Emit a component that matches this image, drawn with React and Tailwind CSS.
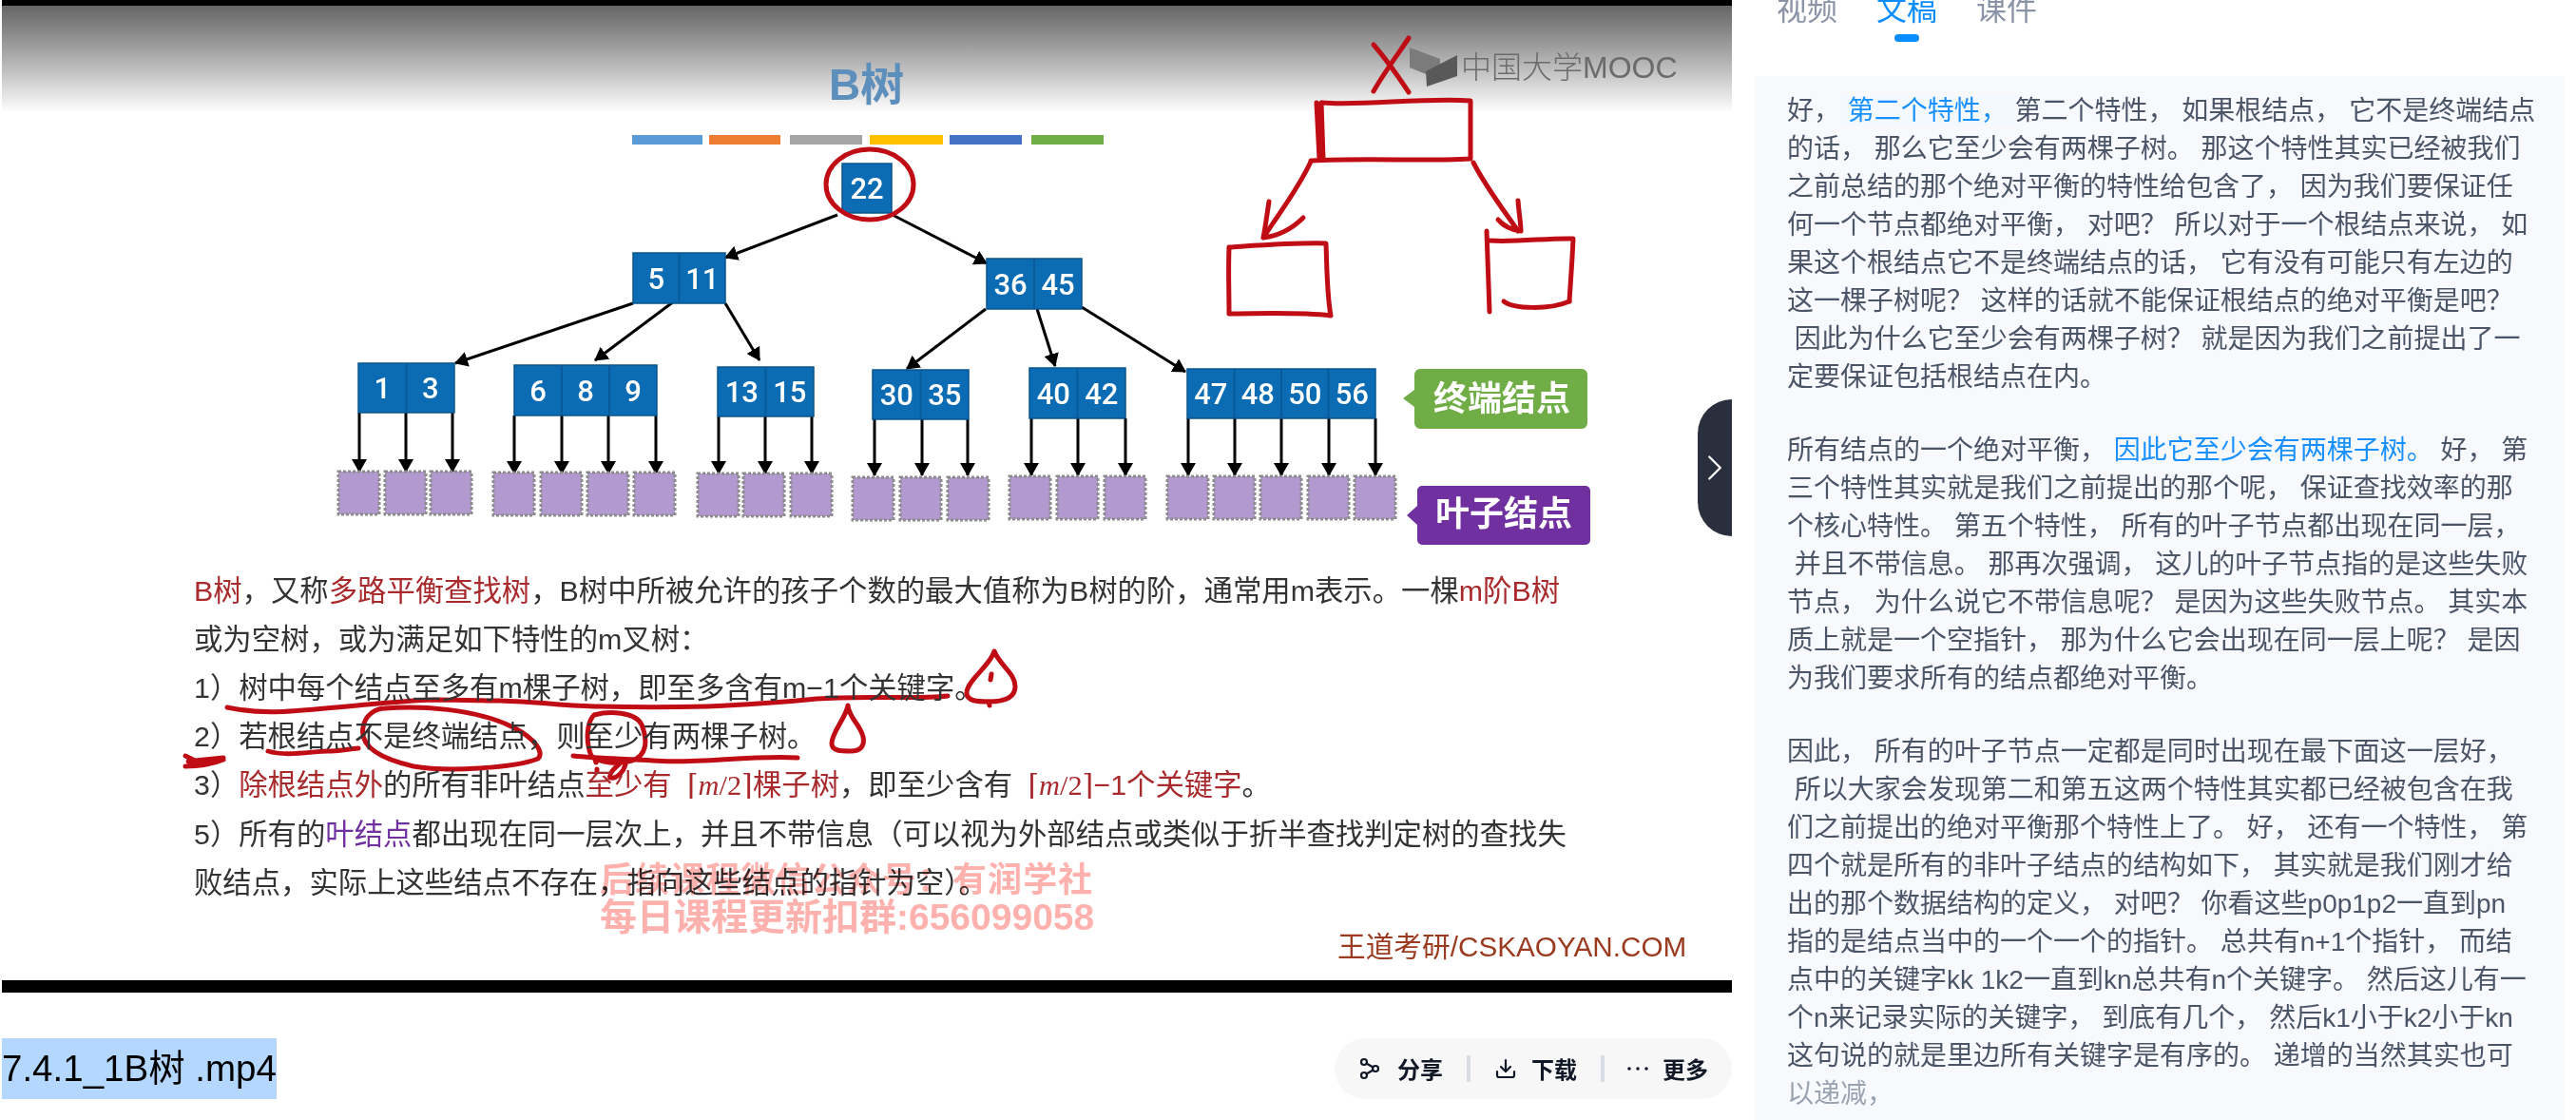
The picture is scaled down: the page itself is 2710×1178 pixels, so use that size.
import React from "react";
import { Share2, Download, ChevronRight } from "lucide-react";

const RED = "#c00d15";
const nodes = [
  { x: 886, y: 172, w: 52, h: 52, v: ["22"] },
  { x: 666, y: 266, w: 97, h: 53, v: ["5", "11"] },
  { x: 1038, y: 272, w: 100, h: 53, v: ["36", "45"] },
  { x: 377, y: 382, w: 101, h: 52, v: ["1", "3"] },
  { x: 541, y: 384, w: 150, h: 53, v: ["6", "8", "9"] },
  { x: 755, y: 386, w: 101, h: 52, v: ["13", "15"] },
  { x: 918, y: 389, w: 101, h: 52, v: ["30", "35"] },
  { x: 1083, y: 387, w: 101, h: 53, v: ["40", "42"] },
  { x: 1249, y: 388, w: 198, h: 52, v: ["47", "48", "50", "56"] },
];
const slant = [
  [881, 226, 763, 271],
  [937, 225, 1038, 277],
  [666, 319, 479, 382],
  [713, 314, 626, 379],
  [763, 319, 799, 379],
  [1037, 325, 954, 388],
  [1091, 325, 1110, 385],
  [1138, 323, 1247, 391],
];
const verticals = [
  { y1: 434, y2: 496, xs: [378, 427, 476] },
  { y1: 437, y2: 498, xs: [541, 591, 640, 690] },
  { y1: 438, y2: 498, xs: [756, 805, 854] },
  { y1: 441, y2: 500, xs: [920, 970, 1018] },
  { y1: 440, y2: 500, xs: [1085, 1134, 1184] },
  { y1: 440, y2: 500, xs: [1250, 1299, 1348, 1398, 1447] },
];
const leaves = [
  { y: 496, xs: [356, 405, 453] },
  { y: 497, xs: [519, 569, 618, 667] },
  { y: 498, xs: [734, 782, 832] },
  { y: 502, xs: [897, 947, 997] },
  { y: 501, xs: [1062, 1112, 1162] },
  { y: 501, xs: [1228, 1277, 1326, 1376, 1425] },
];
const stripes = [
  [665, 74, "#5b9bd5"],
  [746, 75, "#ed7d31"],
  [831, 76, "#a5a5a5"],
  [915, 77, "#ffc000"],
  [999, 76, "#4472c4"],
  [1085, 76, "#70ad47"],
];
const ink = [
  "M1445 47 C1458 62 1472 82 1482 97",
  "M1482 40 C1470 58 1455 78 1445 96",
  "M1391 108 C1430 112 1500 102 1547 106 L1547 167 C1500 170 1440 166 1379 169",
  "M1385 108 L1388 167 M1390 108 L1392 167",
  "M1379 170 C1365 200 1345 225 1329 250 M1335 212 C1333 225 1331 240 1329 250 C1345 248 1360 240 1371 229",
  "M1550 171 C1565 200 1585 225 1597 243 M1597 211 C1598 225 1600 235 1600 243 C1592 242 1582 238 1576 231",
  "M1293 260 C1325 258 1365 255 1395 256 C1396 285 1396 310 1400 332 C1365 328 1325 330 1293 330 C1293 305 1292 285 1293 260",
  "M1564 243 C1565 270 1566 300 1567 328",
  "M1567 253 C1595 255 1630 250 1655 251 C1654 275 1652 300 1651 317",
  "M1582 317 C1592 325 1630 326 1651 317",
  "M239 744 C275 752 310 748 342 745 C390 741 420 737 457 736 C490 736 510 737 526 737 C565 738 600 743 629 743 C670 744 705 744 744 743 C790 741 830 738 859 735 C910 731 960 736 997 732",
  "M1046 685 C1042 700 1018 715 1017 728 C1016 738 1030 738 1040 738 C1055 738 1068 735 1068 722 C1068 708 1052 700 1046 685",
  "M1043 709 L1042 715 M1040 738 L1041 742",
  "M282 790 C300 796 330 790 345 790 C355 790 365 788 377 787",
  "M405 745 C440 742 500 745 540 765 C565 778 572 792 566 798 C540 808 470 812 435 806 C400 798 378 785 382 765 C384 752 395 745 405 745",
  "M625 752 C640 748 668 748 675 762 C682 780 680 795 665 800 C650 804 632 803 622 795 C616 780 617 760 625 752",
  "M603 795 C630 798 660 798 687 800 C730 804 790 794 839 797",
  "M892 742 C890 755 875 770 875 782 C875 790 885 790 895 790 C905 790 910 785 908 775 C905 762 893 755 892 742",
  "M195 795 L205 800 L235 797 M195 806 C210 806 225 803 235 799 M198 801 L230 800",
  "M652 803 C644 810 640 815 642 818 C648 820 656 812 658 804",
  "M626 799 L627 802 M628 809 L628 811",
];

function SlideDrawing() {
  return (
    <svg className="absolute left-0 top-0 blur-[0.5px]" width="1820" height="1044" viewBox="2 0 1820 1044" fill="none">
      <defs>
        <marker id="tip" viewBox="0 0 14 16" refX="13" refY="8" markerWidth="14" markerHeight="16" markerUnits="userSpaceOnUse" orient="auto">
          <path d="M0 0 L14 8 L0 16 Z" fill="#000" />
        </marker>
      </defs>
      <text x="872" y="105" fill="#5d8fbd" fontSize="46" fontWeight="700" fontFamily="'Liberation Sans','Noto Sans CJK SC',sans-serif">B树</text>
      {stripes.map(([x, w, c]) => (
        <rect key={x} x={x} y="142" width={w} height="10" fill={c} />
      ))}
      <polygon points="1483,50 1515,62 1515,84 1483,71" fill="#7b7b7b" />
      <polygon points="1500,75 1533,58 1533,80 1501,91" fill="#595959" />
      <text x="1537" y="82" fill="#6b6b6b" fontSize="32" fontWeight="300" fontFamily="'Liberation Sans','Noto Sans CJK SC',sans-serif">中国大学MOOC</text>
      {slant.map(([a, b, c, d], i) => (
        <line key={i} x1={a} y1={b} x2={c} y2={d} stroke="#000" strokeWidth="3" markerEnd="url(#tip)" />
      ))}
      {verticals.map((g) =>
        g.xs.map((x) => (
          <line key={g.y1 + "-" + x} x1={x} y1={g.y1} x2={x} y2={g.y2} stroke="#000" strokeWidth="3" markerEnd="url(#tip)" />
        ))
      )}
      {nodes.map((n) => {
        const cw = n.w / n.v.length;
        return (
          <g key={n.x}>
            <rect x={n.x} y={n.y} width={n.w} height={n.h} fill="#0b6cb4" stroke="#09558f" strokeWidth="1.5" />
            {n.v.map((t, i) => (
              <g key={i}>
                {i > 0 && <line x1={n.x + cw * i} y1={n.y} x2={n.x + cw * i} y2={n.y + n.h} stroke="#0a5a99" strokeWidth="2" />}
                <text x={n.x + cw * i + cw / 2} y={n.y + n.h / 2 + 11} textAnchor="middle" fill="#fff" fontSize="31" fontFamily="Roboto,'Liberation Sans',sans-serif" fontWeight="500">{t}</text>
              </g>
            ))}
          </g>
        );
      })}
      {leaves.map((g) =>
        g.xs.map((x) => (
          <rect key={x} x={x} y={g.y} width="43" height="45" fill="#b29ad0" stroke="#8c8c8c" strokeWidth="3" strokeDasharray="3 2" />
        ))
      )}
      <path d="M1488 394 a6 6 0 0 1 6 -6 H1664 a6 6 0 0 1 6 6 V445 a6 6 0 0 1 -6 6 H1494 a6 6 0 0 1 -6 -6 V428 L1476 419 L1488 410 Z" fill="#70ad47" />
      <text x="1508" y="432" fill="#fff" fontSize="36" fontWeight="700" fontFamily="'Noto Sans CJK SC',sans-serif">终端结点</text>
      <path d="M1491 516 a5 5 0 0 1 5 -5 H1668 a5 5 0 0 1 5 5 V568 a5 5 0 0 1 -5 5 H1496 a5 5 0 0 1 -5 -5 V552 L1480 542 L1491 532 Z" fill="#7030a0" />
      <text x="1510" y="553" fill="#fff" fontSize="36" fontWeight="700" fontFamily="'Noto Sans CJK SC',sans-serif">叶子结点</text>
      <ellipse cx="915" cy="194" rx="46" ry="37" stroke={RED} strokeWidth="5" />
      {ink.map((d, i) => (
        <path key={i} d={d} stroke={RED} strokeWidth="5" strokeLinecap="round" strokeLinejoin="round" />
      ))}
    </svg>
  );
}

function R({ children }) {
  return <span className="text-[#a82a2c]">{children}</span>;
}
function Ceil() {
  return <span className="font-['Liberation_Serif','DejaVu_Serif',serif]"> ⌈<i>m</i>/2⌉</span>;
}

function Slide() {
  return (
    <div className="relative mt-[478px] ml-[202px] whitespace-pre text-[30.36px] leading-[51px] text-[#333333] blur-[0.4px] font-['Liberation_Sans','Noto_Sans_CJK_SC',sans-serif]">
      <p><R>B树</R>，又称<R>多路平衡查找树</R>，B树中所被允许的孩子个数的最大值称为B树的阶，通常用m表示。一棵<R>m阶B树</R></p>
      <p>或为空树，或为满足如下特性的m叉树：</p>
      <p>1）树中每个结点至多有m棵子树，即至多含有m−1个关键字。</p>
      <p>2）若根结点不是终端结点，则至少有两棵子树。</p>
      <p>3）<R>除根结点外</R>的所有非叶结点<R>至少有 <Ceil />棵子树</R>，即至少含有 <R><Ceil />−1个关键字</R>。</p>
      <p>5）所有的<span className="text-[#7030a0]">叶结点</span>都出现在同一层次上，并且不带信息（可以视为外部结点或类似于折半查找判定树的查找失</p>
      <p>败结点，实际上这些结点不存在，指向这些结点的指针为空）。</p>
    </div>
  );
}

const para1 = [
  ["好，", <span key="h" className="bg-[#f3f9ff] text-[#1890ff]"> 第二个特性， </span>, "第二个特性， 如果根结点， 它不是终端结点"],
  ["的话， 那么它至少会有两棵子树。 那这个特性其实已经被我们"],
  ["之前总结的那个绝对平衡的特性给包含了， 因为我们要保证任"],
  ["何一个节点都绝对平衡， 对吧？ 所以对于一个根结点来说， 如"],
  ["果这个根结点它不是终端结点的话， 它有没有可能只有左边的"],
  ["这一棵子树呢？ 这样的话就不能保证根结点的绝对平衡是吧？"],
  [" 因此为什么它至少会有两棵子树？ 就是因为我们之前提出了一"],
  ["定要保证包括根结点在内。"],
];
const para2 = [
  ["所有结点的一个绝对平衡， ", <span key="b" className="text-[#1890ff]">因此它至少会有两棵子树。</span>, " 好， 第"],
  ["三个特性其实就是我们之前提出的那个呢， 保证查找效率的那"],
  ["个核心特性。 第五个特性， 所有的叶子节点都出现在同一层，"],
  [" 并且不带信息。 那再次强调， 这儿的叶子节点指的是这些失败"],
  ["节点， 为什么说它不带信息呢？ 是因为这些失败节点。 其实本"],
  ["质上就是一个空指针， 那为什么它会出现在同一层上呢？ 是因"],
  ["为我们要求所有的结点都绝对平衡。"],
];
const para3 = [
  "因此， 所有的叶子节点一定都是同时出现在最下面这一层好，",
  " 所以大家会发现第二和第五这两个特性其实都已经被包含在我",
  "们之前提出的绝对平衡那个特性上了。 好， 还有一个特性， 第",
  "四个就是所有的非叶子结点的结构如下， 其实就是我们刚才给",
  "出的那个数据结构的定义， 对吧？ 你看这些p0p1p2一直到pn",
  "指的是结点当中的一个一个的指针。 总共有n+1个指针， 而结",
  "点中的关键字kk 1k2一直到kn总共有n个关键字。 然后这儿有一",
  "个n来记录实际的关键字， 到底有几个， 然后k1小于k2小于kn",
  "这句说的就是里边所有关键字是有序的。 递增的当然其实也可",
];

function Tabs() {
  return (
    <div className="flex h-[80px] shrink-0 gap-[41px] pl-[23px] text-[32px] leading-[44px] text-[#8a94a6]">
      <div className="-mt-[12px]">视频</div>
      <div className="-mt-[12px] flex flex-col items-center text-[#0b8cff]">
        <span>文稿</span>
        <span className="mt-[4px] h-[8px] w-[26px] rounded-full bg-[#0b8cff]" />
      </div>
      <div className="-mt-[12px]">课件</div>
    </div>
  );
}

function Sep() {
  return <span className="mx-[25px] h-[28px] w-[4px] bg-[#d9dce5]" />;
}

function Actions() {
  return (
    <div className="flex h-[64px] w-[418px] items-center rounded-[32px] bg-[#f7f7f8] pl-[25px] text-[24px] font-semibold text-[#111827] font-['Noto_Sans_CJK_SC',sans-serif]">
      <Share2 size={24} strokeWidth={2.2} className="mr-[17px] -scale-x-100" />
      <span>分享</span>
      <Sep />
      <Download size={24} strokeWidth={2.2} className="mr-[15px]" />
      <span>下载</span>
      <Sep />
      <svg width="22" height="6" viewBox="0 0 22 6" className="mr-[15px] -ml-[1px]" fill="#111827">
        <circle cx="2" cy="3" r="1.8" />
        <circle cx="11" cy="3" r="1.8" />
        <circle cx="20" cy="3" r="1.8" />
      </svg>
      <span>更多</span>
    </div>
  );
}

export default function App() {
  return (
    <div className="flex h-[1178px] w-[2710px] overflow-hidden bg-white font-['Liberation_Sans','Noto_Sans_CJK_SC',sans-serif]">
      <div className="ml-[2px] flex w-[1820px] shrink-0 flex-col">
        <div className="relative flex h-[1044px] shrink-0 flex-col bg-white">
          <div className="h-[6px] shrink-0 bg-black" />
          <div className="h-[112px] shrink-0 bg-linear-to-b from-[#666666] to-white" />
          <SlideDrawing />
          <Slide />
          <div className="mt-auto h-[13px] shrink-0 bg-black" />
          <div className="absolute left-[629px] top-[906px] whitespace-pre font-bold leading-[39px] text-[#ffb1ae] mix-blend-multiply font-['Liberation_Sans','Noto_Sans_CJK_SC',sans-serif]">
            <div className="text-[36px] tracking-[1.1px]">后续课程微信公众号：有润学社</div>
            <div className="text-[39px]">每日课程更新扣群:656099058</div>
          </div>
          <div className="absolute left-[1405px] top-[974px] text-[29.7px] leading-[44px] text-[#9a3b1f] blur-[0.4px]">王道考研/CSKAOYAN.COM</div>
          <div className="absolute right-0 top-[420px] flex h-[144px] w-[36px] items-center justify-center rounded-l-[36px] bg-[#2a2f3e] text-white">
            <ChevronRight size={46} strokeWidth={1.2} className="shrink-0" />
          </div>
        </div>
        <div className="mt-[48px] flex items-start justify-between">
          <span className="h-[64px] bg-[#b3d7ff] text-[38.5px] leading-[64px] text-black whitespace-pre">7.4.1_1B树 .mp4</span>
          <Actions />
        </div>
      </div>
      <div className="ml-[24px] mr-[12px] flex min-w-0 flex-1 flex-col">
        <Tabs />
        <div className="flex-1 overflow-hidden bg-[#f7f9fd] pl-[34px] pt-[17px] text-[28px] leading-[40px] text-[#4b5568] whitespace-pre">
          <div className="mb-[37px]">{para1.map((l, i) => <div key={i}>{l}</div>)}</div>
          <div className="mb-[37px]">{para2.map((l, i) => <div key={i}>{l}</div>)}</div>
          <div>
            {para3.map((l, i) => <div key={i}>{l}</div>)}
            <div className="text-[#9aa3b2]">以递减，</div>
          </div>
        </div>
      </div>
    </div>
  );
}
